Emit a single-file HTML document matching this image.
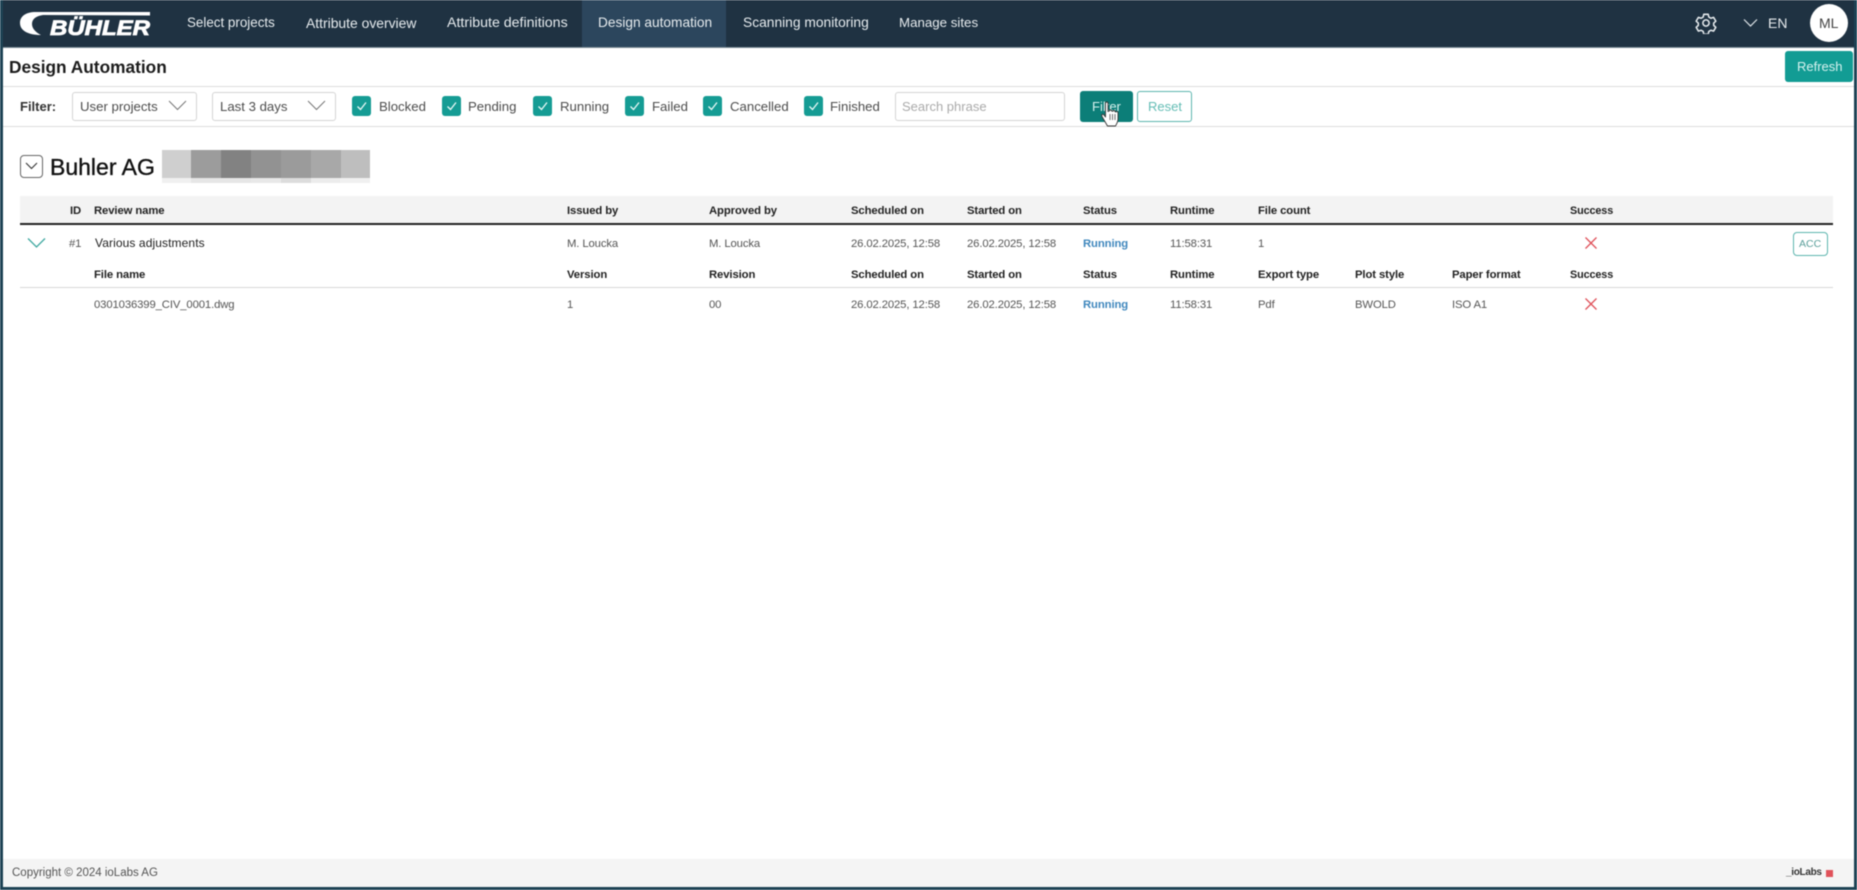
<!DOCTYPE html>
<html lang="en">
<head>
<meta charset="utf-8">
<title>Design Automation</title>
<style>
html,body{margin:0;padding:0;background:#fff}
body{width:1857px;height:890px;overflow:hidden;position:relative;font-family:"Liberation Sans",Arial,sans-serif;color:#444}
#p{position:absolute;left:0;top:0;width:1857px;height:890px;filter:blur(.55px);overflow:hidden;background:#fff}
.a{position:absolute}
.t{position:absolute;white-space:nowrap;line-height:16px;transform:translateY(-8px)}
.n{color:#e6ebee;font-size:13.7px;top:23px}
.h{font-weight:bold;font-size:11.3px;color:#222;letter-spacing:-.1px}
.c{font-size:11.3px;color:#555;letter-spacing:-.12px}
.run{font-weight:bold;font-size:11.3px;color:#3f87bd;letter-spacing:-.1px}
.f{font-size:13.2px;color:#4d4d4d;top:107px}
.box{position:absolute;top:92px;height:27px;border:1px solid #d4d4d4;border-radius:3px;background:#fff;box-sizing:content-box}
.cb{position:absolute;top:96px;width:19px;height:20px;background:#159c94;border-radius:3px}
</style>
</head>
<body>
<div id="p">
  <!-- frame -->
  <div class="a" style="left:0;top:0;width:1857px;height:47px;background:#1f3242"></div>
  <div class="a" style="left:582px;top:0;width:144px;height:47px;background:#2c465d"></div>
  <div class="a" style="left:0;top:47px;width:1857px;height:1px;background:#7d8d97"></div>
  <div class="a" style="left:0;top:0;width:3px;height:890px;background:#1d4254"></div>
  <div class="a" style="left:1854px;top:0;width:3px;height:890px;background:#1d4254"></div>
  <div class="a" style="left:0;top:887px;width:1857px;height:3px;background:#1d4254"></div>

  <!-- logo -->
  <svg class="a" style="left:17px;top:8px" width="136" height="30" viewBox="0 0 136 30">
    <path d="M19 4C9 4 3 8 3 15C3 22 10 27 24 27C18 24 15 20 15 16C15 11 19 8 26 7L133 7.500L133 4Z" fill="#fff"/>
    <text x="33" y="27" font-family="Liberation Sans" font-weight="bold" font-style="italic" font-size="21.500" fill="#fff" stroke="#fff" stroke-width=".8" textLength="100" lengthAdjust="spacingAndGlyphs">BÜHLER</text>
  </svg>

  <!-- nav -->
  <span class="t n" style="left:187px;font-size:13.400px">Select projects</span>
  <span class="t n" style="left:306px;font-size:13.900px">Attribute overview</span>
  <span class="t n" style="left:447px;font-size:14.200px">Attribute definitions</span>
  <span class="t n" style="left:598px">Design automation</span>
  <span class="t n" style="left:743px;font-size:13.800px">Scanning monitoring</span>
  <span class="t n" style="left:899px;font-size:13.300px">Manage sites</span>

  <!-- gear -->
  <svg class="a" style="left:1695px;top:12px" width="22" height="22" viewBox="0 0 24 24" fill="none" stroke="#e4e9ec" stroke-width="1.700" stroke-linejoin="round">
    <path d="M9.600 2.500h4.800l.7 3 2.200 1.300 3-.9 2.400 4.100-2.300 2.100v2.500l2.300 2.100-2.400 4.100-3-.9-2.200 1.300-.7 3H9.600l-.7-3-2.200-1.300-3 .9-2.400-4.100 2.300-2.100v-2.500L1.300 10l2.400-4.100 3 .9 2.200-1.300z"/>
    <circle cx="12" cy="12" r="3.400"/>
  </svg>
  <svg class="a" style="left:1743px;top:18px" width="15" height="10" viewBox="0 0 15 10" fill="none" stroke="#dfe5e9" stroke-width="1.200"><path d="M1 1.500L7.500 8L14 1.500"/></svg>
  <span class="t" style="left:1768px;top:23px;font-size:14px;color:#e6eaed">EN</span>
  <div class="a" style="left:1810px;top:4px;width:38px;height:38px;border-radius:50%;background:#fff"></div>
  <span class="t" style="left:1819px;top:23px;font-size:14px;color:#444">ML</span>

  <!-- title row -->
  <span class="t" style="left:9px;top:67px;font-size:17.300px;font-weight:bold;color:#1c1c1c">Design Automation</span>
  <div class="a" style="left:1785px;top:51px;width:68px;height:31px;background:#129c94;border-radius:3px"></div>
  <span class="t" style="left:1797px;top:67px;font-size:13px;color:#d6f2ef">Refresh</span>
  <div class="a" style="left:3px;top:86px;width:1851px;height:1px;background:#dcdcdc"></div>
  <div class="a" style="left:3px;top:126px;width:1851px;height:1px;background:#dcdcdc"></div>

  <!-- filter row -->
  <span class="t" style="left:20px;top:107px;font-size:13px;font-weight:bold;color:#333">Filter:</span>
  <div class="box" style="left:72px;width:123px"></div>
  <span class="t f" style="left:80px">User projects</span>
  <svg class="a" style="left:168px;top:100px" width="19" height="11" viewBox="0 0 19 11" fill="none" stroke="#777" stroke-width="1"><path d="M1 1L9.500 9.500L18 1"/></svg>
  <div class="box" style="left:212px;width:122px"></div>
  <span class="t f" style="left:220px">Last 3 days</span>
  <svg class="a" style="left:307px;top:100px" width="19" height="11" viewBox="0 0 19 11" fill="none" stroke="#777" stroke-width="1"><path d="M1 1L9.500 9.500L18 1"/></svg>

  <div class="cb" style="left:352px"><svg width="19" height="20" fill="none" stroke="#e8f8f6" stroke-width="1.300"><path d="M5.500 10.500L8.500 13.500L14 6.500"/></svg></div>
  <span class="t f" style="left:379px">Blocked</span>
  <div class="cb" style="left:442px"><svg width="19" height="20" fill="none" stroke="#e8f8f6" stroke-width="1.300"><path d="M5.500 10.500L8.500 13.500L14 6.500"/></svg></div>
  <span class="t f" style="left:468px">Pending</span>
  <div class="cb" style="left:533px"><svg width="19" height="20" fill="none" stroke="#e8f8f6" stroke-width="1.300"><path d="M5.500 10.500L8.500 13.500L14 6.500"/></svg></div>
  <span class="t f" style="left:560px">Running</span>
  <div class="cb" style="left:625px"><svg width="19" height="20" fill="none" stroke="#e8f8f6" stroke-width="1.300"><path d="M5.500 10.500L8.500 13.500L14 6.500"/></svg></div>
  <span class="t f" style="left:652px">Failed</span>
  <div class="cb" style="left:703px"><svg width="19" height="20" fill="none" stroke="#e8f8f6" stroke-width="1.300"><path d="M5.500 10.500L8.500 13.500L14 6.500"/></svg></div>
  <span class="t f" style="left:730px">Cancelled</span>
  <div class="cb" style="left:804px"><svg width="19" height="20" fill="none" stroke="#e8f8f6" stroke-width="1.300"><path d="M5.500 10.500L8.500 13.500L14 6.500"/></svg></div>
  <span class="t f" style="left:830px">Finished</span>

  <div class="box" style="left:895px;width:168px"></div>
  <span class="t f" style="left:902px;color:#aaa;font-size:13px">Search phrase</span>

  <div class="a" style="left:1080px;top:91px;width:53px;height:31px;background:#0c7e78;border-radius:3px"></div>
  <span class="t" style="left:1092px;top:107px;font-size:13px;color:#d8f2ef">Filter</span>
  <div class="a" style="left:1137px;top:91px;width:53px;height:29px;border:1px solid #5cb5ae;border-radius:3px;background:#fff"></div>
  <span class="t" style="left:1148px;top:107px;font-size:13px;color:#64bdb5">Reset</span>
  <svg class="a" style="left:1100px;top:100px" width="20" height="28" viewBox="0 0 20 28">
    <path d="M5.500 3.500C5.500 1.500 8 1.500 8 3.500V11.500L9.500 11C9.500 9.500 11.500 9.500 11.500 11L13 11.300C13.200 10 15 10.200 15 11.700L16 12C16.500 11 18 11.500 18 13V19C18 22 16.500 24 15.500 26H7.500L2 16.500C1 14.500 3 13.500 4 15L5.500 17Z" fill="#fff" stroke="#333" stroke-width=".9" stroke-linejoin="round"/>
    <path d="M10 14V20M12.500 14V20M15 14V20" stroke="#333" stroke-width=".7"/>
  </svg>

  <!-- group head -->
  <div class="a" style="left:20px;top:155px;width:21px;height:21px;border:1px solid #666;border-radius:4px;background:#fff"></div>
  <svg class="a" style="left:25px;top:162px" width="13" height="8" viewBox="0 0 13 8" fill="none" stroke="#333" stroke-width="1.100"><path d="M1 1L6.500 6.500L12 1"/></svg>
  <span class="t" style="left:50px;top:167px;font-size:23px;line-height:26px;transform:translateY(-13px);color:#111;-webkit-text-stroke:.35px #111">Buhler AG</span>
  <div class="a" style="left:162px;top:150px;width:208px;height:33px;display:flex;flex-direction:column">
    <div style="display:flex;height:28px">
      <i style="width:29px;background:#cfcfcf"></i><i style="width:30px;background:#9c9c9c"></i><i style="width:30px;background:#828282"></i><i style="width:30px;background:#929292"></i><i style="width:30px;background:#9b9b9b"></i><i style="width:30px;background:#a8a8a8"></i><i style="width:29px;background:#bebebe"></i>
    </div>
    <div style="display:flex;height:5px">
      <i style="width:29px;background:#f0f0f0"></i><i style="width:60px;background:#e6e6e6"></i><i style="width:30px;background:#e8e8e8"></i><i style="width:30px;background:#dcdcdc"></i><i style="width:29px;background:#ececec"></i><i style="width:30px;background:#f0f0f0"></i>
    </div>
  </div>

  <!-- table header -->
  <div class="a" style="left:20px;top:196px;width:1813px;height:27px;background:#f3f3f3"></div>
  <div class="a" style="left:20px;top:223px;width:1813px;height:2px;background:#222"></div>
  <span class="t h" style="left:70px;top:211px">ID</span>
  <span class="t h" style="left:94px;top:211px">Review name</span>
  <span class="t h" style="left:567px;top:211px">Issued by</span>
  <span class="t h" style="left:709px;top:211px">Approved by</span>
  <span class="t h" style="left:851px;top:211px">Scheduled on</span>
  <span class="t h" style="left:967px;top:211px">Started on</span>
  <span class="t h" style="left:1083px;top:211px">Status</span>
  <span class="t h" style="left:1170px;top:211px">Runtime</span>
  <span class="t h" style="left:1258px;top:211px">File count</span>
  <span class="t h" style="left:1570px;top:211px;font-size:10.800px">Success</span>

  <!-- row 1 -->
  <svg class="a" style="left:27px;top:237px" width="19" height="12" viewBox="0 0 19 12" fill="none" stroke="#3fa8a0" stroke-width="1.300"><path d="M1 1.500L9.500 10L18 1.500"/></svg>
  <span class="t c" style="left:69px;top:243.500px">#1</span>
  <span class="t c" style="left:95px;top:243px;color:#222;font-size:12px;letter-spacing:.1px">Various adjustments</span>
  <span class="t c" style="left:567px;top:244px">M. Loucka</span>
  <span class="t c" style="left:709px;top:244px">M. Loucka</span>
  <span class="t c" style="left:851px;top:244px">26.02.2025, 12:58</span>
  <span class="t c" style="left:967px;top:244px">26.02.2025, 12:58</span>
  <span class="t run" style="left:1083px;top:244px">Running</span>
  <span class="t c" style="left:1170px;top:244px">11:58:31</span>
  <span class="t c" style="left:1258px;top:244px">1</span>
  <svg class="a" style="left:1584px;top:236px" width="14" height="14" viewBox="0 0 14 14" fill="none" stroke="#e0525a" stroke-width="1.300"><path d="M1.500 1.500L12.500 12.500M12.500 1.500L1.500 12.500"/></svg>
  <div class="a" style="left:1793px;top:232px;width:33px;height:22px;border:1px solid #5cb5ae;border-radius:4px;background:#fff"></div>
  <span class="t" style="left:1799px;top:244px;font-size:10.500px;color:#5a9f9a">ACC</span>

  <!-- sub header -->
  <span class="t h" style="left:94px;top:275px">File name</span>
  <span class="t h" style="left:567px;top:275px">Version</span>
  <span class="t h" style="left:709px;top:275px">Revision</span>
  <span class="t h" style="left:851px;top:275px">Scheduled on</span>
  <span class="t h" style="left:967px;top:275px">Started on</span>
  <span class="t h" style="left:1083px;top:275px">Status</span>
  <span class="t h" style="left:1170px;top:275px">Runtime</span>
  <span class="t h" style="left:1258px;top:275px">Export type</span>
  <span class="t h" style="left:1355px;top:275px">Plot style</span>
  <span class="t h" style="left:1452px;top:275px">Paper format</span>
  <span class="t h" style="left:1570px;top:275px;font-size:10.800px">Success</span>
  <div class="a" style="left:20px;top:287px;width:1813px;height:1px;background:#d8d8d8"></div>

  <!-- row 2 -->
  <span class="t c" style="left:94px;top:305px">0301036399_CIV_0001.dwg</span>
  <span class="t c" style="left:567px;top:305px">1</span>
  <span class="t c" style="left:709px;top:305px">00</span>
  <span class="t c" style="left:851px;top:305px">26.02.2025, 12:58</span>
  <span class="t c" style="left:967px;top:305px">26.02.2025, 12:58</span>
  <span class="t run" style="left:1083px;top:305px">Running</span>
  <span class="t c" style="left:1170px;top:305px">11:58:31</span>
  <span class="t c" style="left:1258px;top:305px">Pdf</span>
  <span class="t c" style="left:1355px;top:305px">BWOLD</span>
  <span class="t c" style="left:1452px;top:305px">ISO A1</span>
  <svg class="a" style="left:1584px;top:297px" width="14" height="14" viewBox="0 0 14 14" fill="none" stroke="#e0525a" stroke-width="1.300"><path d="M1.500 1.500L12.500 12.500M12.500 1.500L1.500 12.500"/></svg>

  <!-- footer -->
  <div class="a" style="left:3px;top:859px;width:1851px;height:28px;background:#f4f4f4"></div>
  <span class="t" style="left:12px;top:873px;font-size:11.500px;color:#555">Copyright © 2024 ioLabs AG</span>
  <span class="t" style="left:1786px;top:873px;font-size:10px;font-weight:bold;color:#333;letter-spacing:-.3px">_ioLabs</span>
  <div class="a" style="left:1826px;top:870px;width:7px;height:7px;background:#e0525a"></div>
</div>
</body>
</html>
